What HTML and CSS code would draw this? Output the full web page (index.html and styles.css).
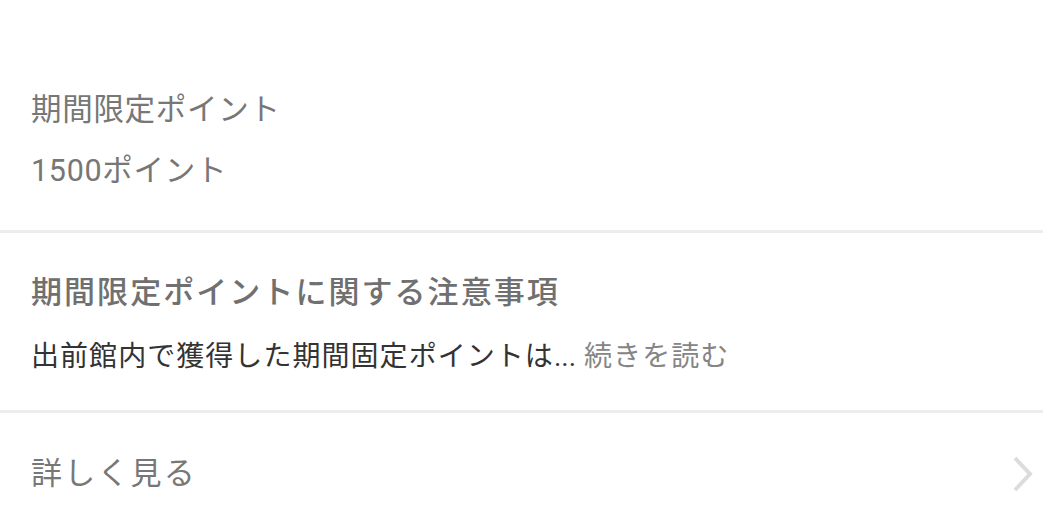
FILE: index.html
```html
<!DOCTYPE html>
<html lang="ja">
<head>
<meta charset="utf-8">
<link rel="stylesheet" href="styles.css">
</head>
<body>
<div class="page">
  <section class="sec sec-points">
    <div class="label">期間限定ポイント</div>
    <div class="value">1500ポイント</div>
  </section>
  <section class="sec sec-notes">
    <div class="title">期間限定ポイントに関する注意事項</div>
    <div class="desc">出前館内で獲得した期間固定ポイントは<span class="dots">...</span> <span class="more">続きを読む</span></div>
  </section>
  <section class="sec sec-link">
    <div class="link-text">詳しく見る</div>
    <svg class="chev" width="22" height="38" viewBox="0 0 22 38" aria-hidden="true">
      <path d="M3 3 L18 19 L3 35" fill="none" stroke="#dcdcdc" stroke-width="4"/>
    </svg>
  </section>
</div>
</body>
</html>
```
FILE: styles.css
```css
html, body {
  margin: 0;
  padding: 0;
  background: #ffffff;
}
body {
  font-family: Roboto, "Noto Sans CJK JP", sans-serif;
}
.page {
  width: 1043px;
}
.sec {
  padding-left: 31px;
}
.sec-points {
  padding-top: 90px;
  padding-bottom: 39px;
  border-bottom: 3px solid #ededed;
}
.label, .value {
  font-size: 30.5px;
  line-height: 40px;
  letter-spacing: 0.7px;
  color: #777777;
}
.value {
  margin-top: 21px;
}
.sec-notes {
  padding-top: 40px;
  padding-bottom: 33px;
  border-bottom: 3px solid #ededed;
}
.title {
  font-size: 31px;
  line-height: 40px;
  letter-spacing: 2.05px;
  color: #707070;
  font-weight: 500;
}
.desc {
  margin-top: 24px;
  font-size: 28px;
  line-height: 40px;
  letter-spacing: 1.05px;
  color: #333333;
}
.dots {
  letter-spacing: 0;
}
.more {
  color: #858585;
}
.sec-link {
  display: flex;
  align-items: center;
  justify-content: space-between;
  padding-top: 41px;
  padding-bottom: 34px;
  padding-right: 9px;
}
.link-text {
  font-size: 31px;
  line-height: 40px;
  letter-spacing: 2.2px;
  color: #777777;
}
.chev {
  display: block;
}
```
